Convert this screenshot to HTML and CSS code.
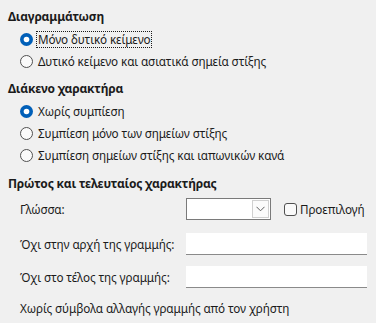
FILE: index.html
```html
<!DOCTYPE html>
<html lang="el">
<head>
<meta charset="utf-8">
<link rel="stylesheet" href="styles.css">
</head>
<body>
<div class="page">
  <div class="heading h1">Διαγραμμάτωση</div>
  <div class="radio-row">
    <svg class="radio" width="13" height="13" viewBox="0 0 13 13"><circle cx="6.5" cy="6.5" r="6.5" fill="#005fb8"/><circle cx="6.5" cy="6.5" r="2.8" fill="#ffffff"/></svg>
    <span class="label focus">Μόνο δυτικό κείμενο</span>
  </div>
  <div class="radio-row">
    <svg class="radio" width="13" height="13" viewBox="0 0 13 13"><circle cx="6.5" cy="6.5" r="6" fill="#fafafa" stroke="#505050" stroke-width="1"/></svg>
    <span class="label">Δυτικό κείμενο και ασιατικά σημεία στίξης</span>
  </div>

  <div class="heading h2">Διάκενο χαρακτήρα</div>
  <div class="radio-row">
    <svg class="radio" width="13" height="13" viewBox="0 0 13 13"><circle cx="6.5" cy="6.5" r="6.5" fill="#005fb8"/><circle cx="6.5" cy="6.5" r="2.8" fill="#ffffff"/></svg>
    <span class="label">Χωρίς συμπίεση</span>
  </div>
  <div class="radio-row">
    <svg class="radio" width="13" height="13" viewBox="0 0 13 13"><circle cx="6.5" cy="6.5" r="6" fill="#fafafa" stroke="#505050" stroke-width="1"/></svg>
    <span class="label">Συμπίεση μόνο των σημείων στίξης</span>
  </div>
  <div class="radio-row">
    <svg class="radio" width="13" height="13" viewBox="0 0 13 13"><circle cx="6.5" cy="6.5" r="6" fill="#fafafa" stroke="#505050" stroke-width="1"/></svg>
    <span class="label">Συμπίεση σημείων στίξης και ιαπωνικών κανά</span>
  </div>

  <div class="heading h3">Πρώτος και τελευταίος χαρακτήρας</div>
  <div class="field-row lang">
    <span class="field-label">Γλώσσα:</span>
    <div class="combo">
      <div class="combo-btn">
        <svg width="9" height="6" viewBox="0 0 9 6"><path d="M0.5 0.8 L4.5 4.8 L8.5 0.8" fill="none" stroke="#606060" stroke-width="1"/></svg>
      </div>
    </div>
    <svg class="check" width="13" height="13" viewBox="0 0 13 13"><rect x="0.5" y="0.5" width="12" height="12" rx="2.5" fill="#fafafa" stroke="#505050" stroke-width="1"/></svg>
    <span class="check-label">Προεπιλογή</span>
  </div>
  <div class="field-row start">
    <span class="field-label">Όχι στην αρχή της γραμμής:</span>
    <div class="input"></div>
  </div>
  <div class="field-row end">
    <span class="field-label">Όχι στο τέλος της γραμμής:</span>
    <div class="input"></div>
  </div>
  <div class="note">Χωρίς σύμβολα αλλαγής γραμμής από τον χρήστη</div>
</div>
</body>
</html>
```

FILE: styles.css
```css
html, body {
  margin: 0;
  padding: 0;
  background: #f0f0f0;
}
body {
  font-family: "Noto Sans", "Open Sans", sans-serif;
  font-size: 11.7px;
  letter-spacing: -0.1px;
  color: #1b1b1b;
  width: 376px;
  height: 323px;
  overflow: hidden;
}
.page {
  display: flex;
  flex-direction: column;
  padding-left: 8px;
  white-space: nowrap;
}
.heading {
  font-weight: bold;
  height: 22px;
  line-height: 22px;
  font-size: 12px;
  letter-spacing: -0.2px;
}
.h1 { margin-top: 6px; }
.h2 { margin-top: 6px; }
.h3 { margin-top: 7px; }
.radio-row {
  display: flex;
  align-items: center;
  height: 22px;
  padding-left: 12px;
}
.radio { flex: none; margin-right: 3px; }
.label {
  line-height: 15px;
  padding: 0 1px;
  border: 1px solid transparent;
}
.label.focus {
  border: 1px dotted #1b1b1b;
}
.field-row {
  display: flex;
  align-items: center;
  height: 22px;
  padding-left: 12px;
}
.field-row.lang { margin-top: 3px; }
.field-row.start { margin-top: 13px; }
.field-row.end { margin-top: 11px; }
.field-label {
  width: 166px;
  flex: none;
}
.combo {
  width: 83px;
  height: 20px;
  background: #ffffff;
  border: 1px solid #7a7a7a;
  display: flex;
  justify-content: flex-end;
  align-items: stretch;
  flex: none;
}
.combo-btn {
  width: 15px;
  margin: 1px;
  border: 1px solid #d0d0d0;
  background: #fbfbfb;
  display: flex;
  align-items: center;
  justify-content: center;
}
.check {
  flex: none;
  margin-left: 13px;
  margin-right: 3px;
}
.input {
  width: 181px;
  height: 21px;
  background: #ffffff;
  border-bottom: 1px solid #8a8a8a;
  flex: none;
}
.note {
  margin-top: 9px;
  padding-left: 12px;
  height: 22px;
  line-height: 22px;
}
```
